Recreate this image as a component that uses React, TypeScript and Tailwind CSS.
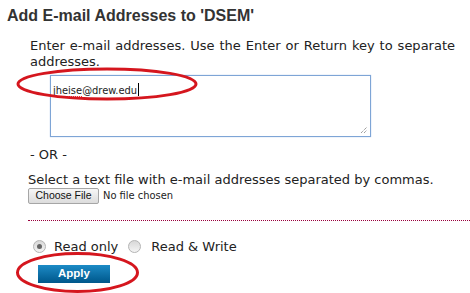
import React from "react";

const verdana = "font-['DejaVu_Sans',Verdana,sans-serif]";

function Radio({ checked }: { checked?: boolean }) {
  return (
    <span className="flex h-[13px] w-[13px] items-center justify-center rounded-full border border-[#b4b4b4] bg-gradient-to-b from-[#d8d8d8] to-[#f4f4f4]">
      {checked && <span className="h-[5px] w-[5px] rounded-full bg-[#666]" />}
    </span>
  );
}

export default function App() {
  return (
    <div className="relative h-[293px] w-full overflow-hidden bg-white text-[#222]">
      {/* Heading */}
      <h2 className="ml-[7px] mt-[6px] font-['Liberation_Sans',Arial,sans-serif] text-[16px] font-bold leading-[20px] text-[#333]">
        Add E-mail Addresses to 'DSEM'
      </h2>

      {/* Typed addresses */}
      <div className={`mt-[12px] pl-[30px] pr-[15px] ${verdana}`}>
        <p className="text-justify text-[13px] leading-[16px]">
          Enter e-mail addresses. Use the Enter or Return key to separate addresses.
        </p>
        <div className="relative ml-[20px] mt-[5px] h-[62px] w-[321px] border border-[#7ea5d6] px-[2px] pt-[1px] shadow-[0_0_1px_#9ebde6]">
          <span className={`text-[11px] leading-[14px] [font-stretch:condensed] ${verdana}`}>
            <span className="underline decoration-[#e33] decoration-dotted decoration-[1px] underline-offset-[2px]">jheise</span>
            @drew.edu
          </span>
          <span className="ml-px inline-block h-[13px] w-px translate-y-[2px] bg-black" />
          <svg className="absolute bottom-[2px] right-[2px]" width="8" height="8" viewBox="0 0 8 8">
            <path d="M1 7L7 1M4 7L7 4" stroke="#777" strokeWidth="1" strokeDasharray="1 1" />
          </svg>
        </div>
      </div>

      {/* OR */}
      <p className={`mt-[10px] pl-[30px] text-[13px] leading-[16px] ${verdana}`}>- OR -</p>

      {/* File upload */}
      <div className={`mt-[9px] pl-[28px] ${verdana}`}>
        <p className="text-[13px] leading-[16px]">
          Select a text file with e-mail addresses separated by commas.
        </p>
        <div className="flex items-center gap-[4px]">
          <span className="flex h-[16px] w-[71px] items-center justify-center rounded-[2px] border border-[#a6a6a6] bg-gradient-to-b from-[#f7f7f7] to-[#dcdcdc] font-['Liberation_Sans',Arial,sans-serif] text-[10.5px] text-[#111]">
            Choose File
          </span>
          <span className="text-[11px] [font-stretch:condensed] text-[#222]">No file chosen</span>
        </div>
      </div>

      {/* Separator */}
      <div className="ml-[28px] mt-[15px] border-t border-dotted border-[#99003d]" />

      {/* Permission */}
      <div className={`mt-[18px] flex items-center pl-[33px] text-[13px] leading-[16px] ${verdana}`}>
        <Radio checked />
        <span className="ml-[8px]">Read only</span>
        <span className="ml-[10px]">
          <Radio />
        </span>
        <span className="ml-[10px]">Read &amp; Write</span>
      </div>

      <div className="mt-[10px] pl-[38px]">
        <button className="flex h-[18px] w-[72px] items-center justify-center bg-gradient-to-b from-[#1c8bc6] to-[#00578b] font-['Liberation_Sans',Arial,sans-serif] text-[11.5px] font-bold text-white">
          Apply
        </button>
      </div>

      {/* Red annotation rings */}
      <svg className="pointer-events-none absolute left-0 top-0" width="470" height="293" viewBox="0 0 470 293">
        <ellipse cx="107" cy="84" rx="89" ry="15" fill="none" stroke="#d5161e" strokeWidth="3" />
        <ellipse cx="77.5" cy="272.5" rx="60" ry="19" fill="none" stroke="#d5161e" strokeWidth="3" />
      </svg>
    </div>
  );
}
